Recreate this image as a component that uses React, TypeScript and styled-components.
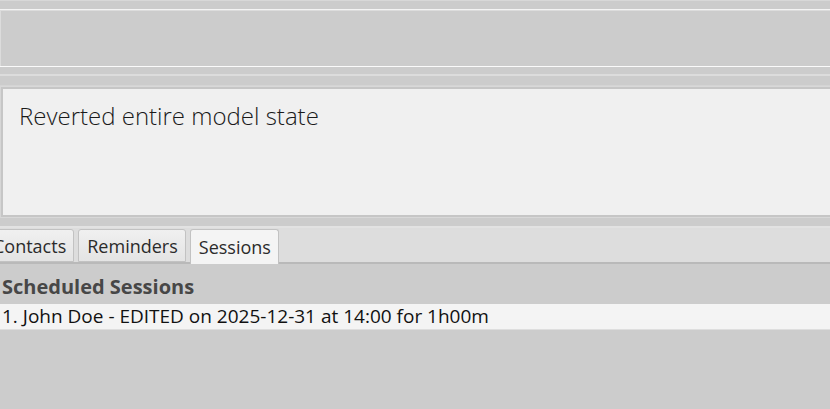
import React from "react";
import styled, { createGlobalStyle } from "styled-components";

const Global = createGlobalStyle`
  html, body { margin: 0; padding: 0; background: #cccccc; }
  body { width: 830px; height: 409px; overflow: hidden; font-family: "Open Sans", "Noto Sans", sans-serif; }
  #root { width: 830px; height: 409px; }
`;

const Window = styled.div`
  display: flex;
  flex-direction: column;
  width: 830px;
  height: 409px;
  background: #cccccc;
  overflow: hidden;
`;

const MenuStrip = styled.div`
  height: 8px;
  border-top: 1px solid #d8d8d8;
  background: #cccccc;
`;

const CommandBox = styled.div`
  height: 56px;
  border-top: 1px solid #f4f4f4;
  border-bottom: 1px solid #fafafa;
  box-shadow: inset 1px 1px 0 #dcdcdc;
  background: #cccccc;
`;

const Divider = styled.div`
  height: 19px;
  display: flex;
  flex-direction: column;
  justify-content: space-between;
  padding-top: 7px;
  box-sizing: border-box;
`;

const DividerLine = styled.div<{ $h: number; $c: string }>`
  height: ${(p) => p.$h}px;
  background: ${(p) => p.$c};
`;

const ResultFrame = styled.div`
  border-top: 1px solid #d8d8d8;
  border-left: 1px solid #d6d6d6;
  border-bottom: 1px solid #d8d8d8;
`;

const ResultPanel = styled.div`
  height: 114px;
  border: 2px solid #c6c6c6;
  border-right: none;
  background: #f0f0f0;
  padding: 12px 0 0 16px;
  font-family: "Open Sans", "Noto Sans", sans-serif;
  font-weight: 300;
  font-size: 24px;
  color: #1a1a1a;
  line-height: 30px;
`;

const TabPane = styled.div`
  margin-top: 8px;
  display: flex;
  flex-direction: column;
  flex: 1;
`;

const TabHeader = styled.div`
  height: 34px;
  border-top: 2px solid #e2e2e2;
  border-bottom: 2px solid #b9b9b9;
  background: #dddddd;
  display: flex;
  align-items: flex-end;
  gap: 4px;
  margin-left: -16px;
`;

const Tab = styled.div<{ $selected?: boolean }>`
  height: ${(p) => (p.$selected ? 35 : 33)}px;
  margin-bottom: ${(p) => (p.$selected ? -2 : 0)}px;
  box-sizing: border-box;
  padding: 0 7px 0 8px;
  display: flex;
  align-items: center;
  border: 1px solid #c2c2c2;
  border-bottom: ${(p) => (p.$selected ? "none" : "1px solid #c2c2c2")};
  border-radius: 3px 3px 0 0;
  background: ${(p) =>
    p.$selected ? "#f4f4f4" : "linear-gradient(#f0f0f0, #e4e4e4)"};
  font-size: 18px;
  color: #2b2b2b;
`;

const Content = styled.div`
  padding: 10px 0 0 2px;
  display: flex;
  flex-direction: column;
`;

const Title = styled.div`
  font-weight: 700;
  font-size: 20px;
  color: #474747;
  line-height: 26px;
  height: 30px;
`;

const Row = styled.div`
  margin-left: -2px;
  padding-left: 2px;
  height: 25px;
  background: #f4f4f4;
  border-bottom: 1px solid #dedede;
  font-size: 19px;
  color: #111111;
  line-height: 25px;
`;

export default function App() {
  return (
    <>
      <Global />
      <Window>
        <MenuStrip />
        <CommandBox />
        <Divider>
          <DividerLine $h={2} $c="#dcdcdc" />
          <DividerLine $h={1} $c="#d4d4d4" />
        </Divider>
        <ResultFrame>
          <ResultPanel>Reverted entire model state</ResultPanel>
        </ResultFrame>
        <TabPane>
          <TabHeader>
            <Tab>Contacts</Tab>
            <Tab>Reminders</Tab>
            <Tab $selected>Sessions</Tab>
          </TabHeader>
          <Content>
            <Title>Scheduled Sessions</Title>
            <Row>1. John Doe - EDITED on 2025-12-31 at 14:00 for 1h00m</Row>
          </Content>
        </TabPane>
      </Window>
    </>
  );
}
